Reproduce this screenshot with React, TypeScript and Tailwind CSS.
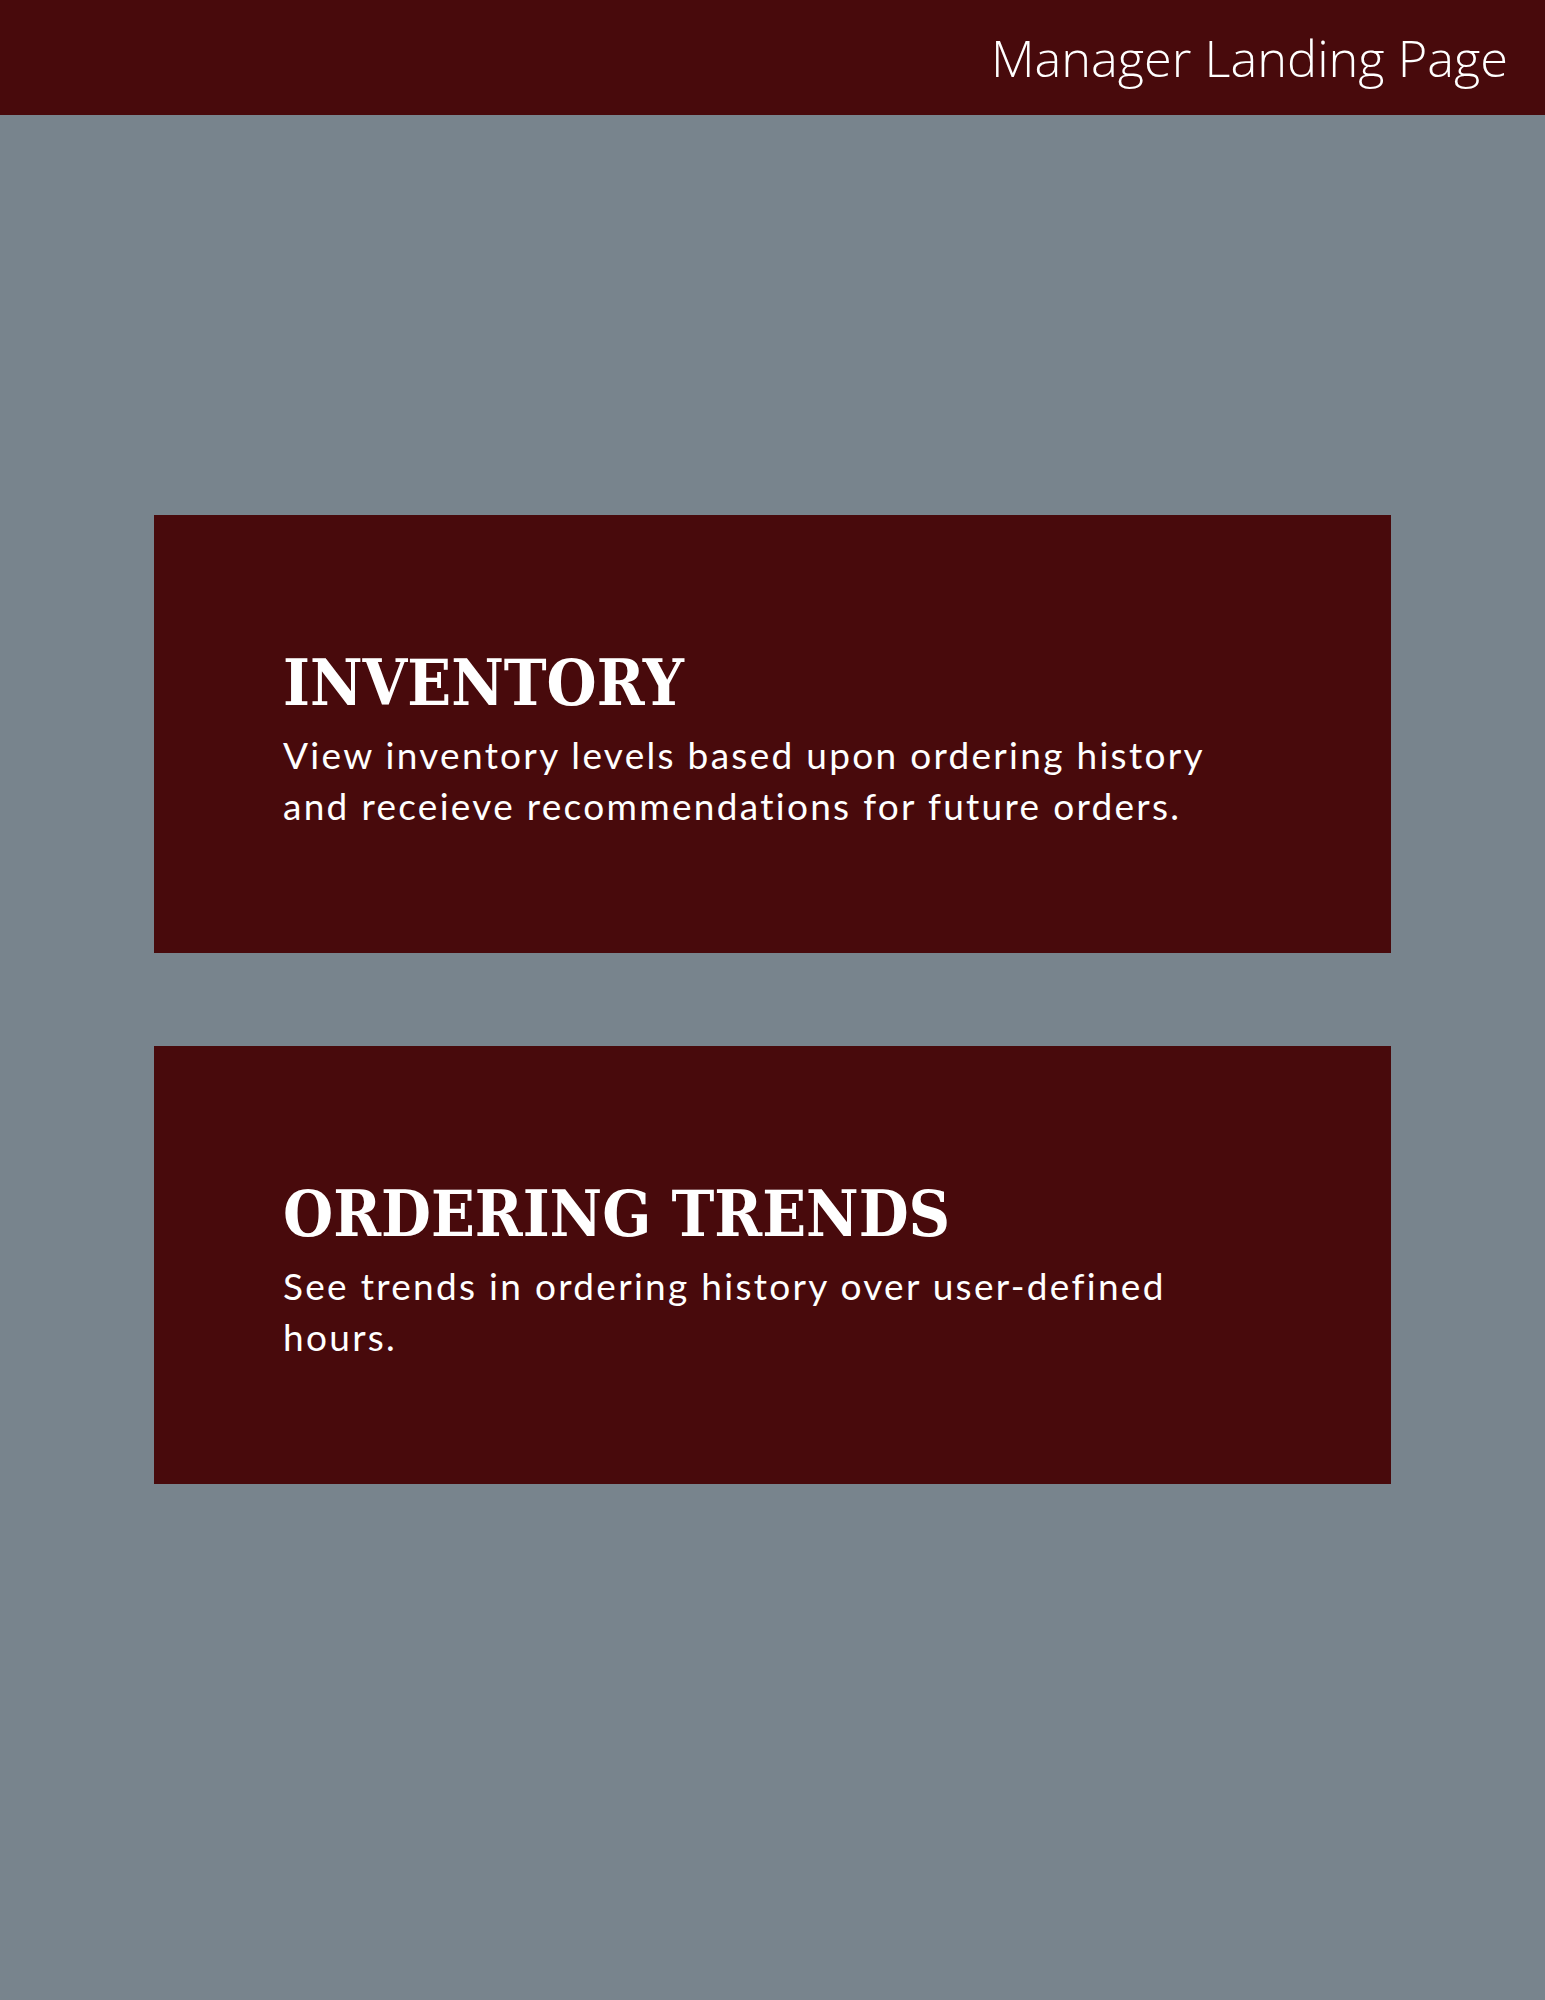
const cards = [
  {
    title: 'INVENTORY',
    body: 'View inventory levels based upon ordering history and receieve recommendations for future orders.',
  },
  {
    title: 'ORDERING TRENDS',
    body: 'See trends in ordering history over user-defined hours.',
  },
]

function FeatureCard({ title, body }: { title: string; body: string }) {
  return (
    <section className="h-[438px] w-full bg-[#480a0c] pl-[129px] pt-[136px]">
      <h2 className="font-['DejaVu_Serif_Condensed','DejaVu_Serif',serif] text-[64px] font-bold leading-none text-white">
        {title}
      </h2>
      <p className="mt-[14px] max-w-[960px] font-['Lato',sans-serif] text-[37px] leading-[51px] tracking-[0.062em] text-white">
        {body}
      </p>
    </section>
  )
}

export default function App() {
  return (
    <div className="min-h-[2000px] bg-[#78848d]">
      <header className="flex h-[115px] items-center justify-end bg-[#480a0c] pr-[37px]">
        <h1 className="font-['Open_Sans',sans-serif] text-[50.5px] font-light text-white">
          Manager Landing Page
        </h1>
      </header>
      <main className="mx-[154px] flex flex-col gap-[93px] pt-[400px]">
        {cards.map((card) => (
          <FeatureCard key={card.title} title={card.title} body={card.body} />
        ))}
      </main>
    </div>
  )
}
